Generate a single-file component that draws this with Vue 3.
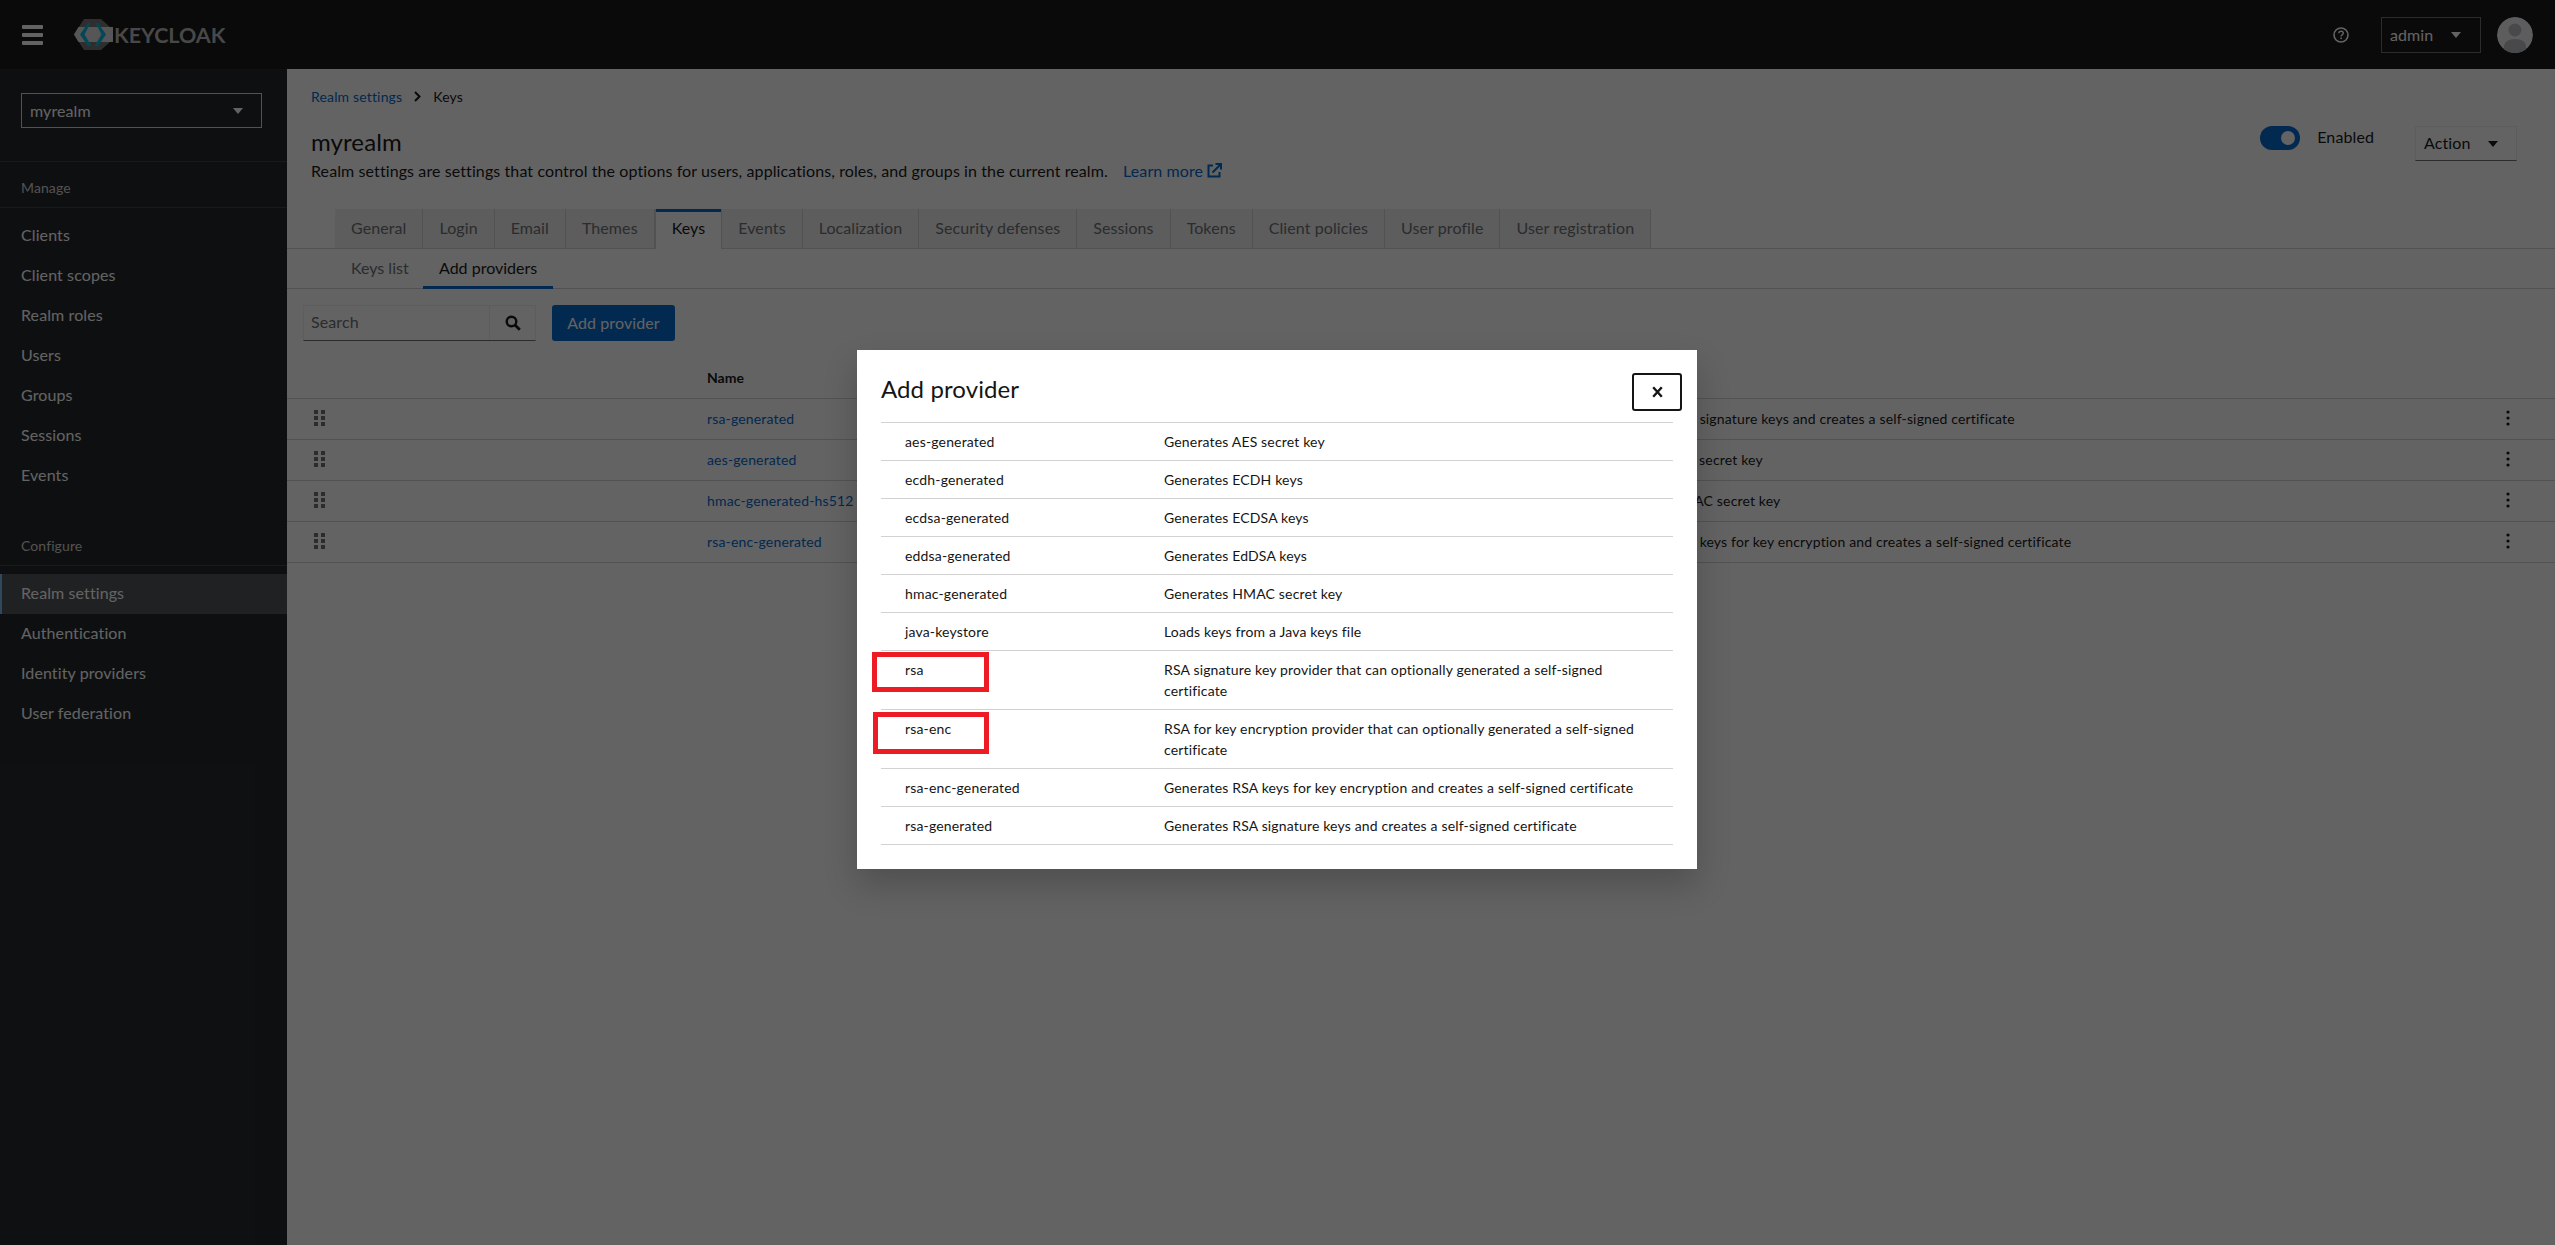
<script setup>
const manage = ['Clients', 'Client scopes', 'Realm roles', 'Users', 'Groups', 'Sessions', 'Events']
const configure = ['Realm settings', 'Authentication', 'Identity providers', 'User federation']
const tabs = ['General', 'Login', 'Email', 'Themes', 'Keys', 'Events', 'Localization', 'Security defenses', 'Sessions', 'Tokens', 'Client policies', 'User profile', 'User registration']

const keys = [
  { name: 'rsa-generated', desc: 'Generates RSA signature keys and creates a self-signed certificate' },
  { name: 'aes-generated', desc: 'Generates AES secret key' },
  { name: 'hmac-generated-hs512', desc: 'Generates HMAC secret key' },
  { name: 'rsa-enc-generated', desc: 'Generates RSA keys for key encryption and creates a self-signed certificate' }
]

const providers = [
  { name: 'aes-generated', desc: 'Generates AES secret key' },
  { name: 'ecdh-generated', desc: 'Generates ECDH keys' },
  { name: 'ecdsa-generated', desc: 'Generates ECDSA keys' },
  { name: 'eddsa-generated', desc: 'Generates EdDSA keys' },
  { name: 'hmac-generated', desc: 'Generates HMAC secret key' },
  { name: 'java-keystore', desc: 'Loads keys from a Java keys file' },
  { name: 'rsa', desc: 'RSA signature key provider that can optionally generated a self-signed certificate', marked: 'one' },
  { name: 'rsa-enc', desc: 'RSA for key encryption provider that can optionally generated a self-signed certificate', marked: 'two' },
  { name: 'rsa-enc-generated', desc: 'Generates RSA keys for key encryption and creates a self-signed certificate' },
  { name: 'rsa-generated', desc: 'Generates RSA signature keys and creates a self-signed certificate' }
]
</script>

<template>
  <div class="page">
    <header class="masthead">
      <div class="burger"><span></span><span></span><span></span></div>
      <div class="logo">
        <svg width="40" height="31" viewBox="0 0 40 31">
          <path d="M10 0h17l9 8v15l-9 8H10L0 15.5z" fill="#757575" />
          <path d="M4.5 8H39v15H4.500L0 15.500z" fill="#dcdcdc" />
          <path d="M14 4l-8 11.500L14 27h3.500l-7-11.500L16.500 4z" fill="#00b8e3" />
          <path d="M24 4l8 11.500L24 27h-3.500l7-11.500L21.500 4z" fill="#00b8e3" />
        </svg>
        <span class="logo-text">KEYCLOAK</span>
      </div>
      <div class="head-right">
        <svg class="help" width="16" height="16" viewBox="0 0 16 16">
          <circle cx="8" cy="8" r="7" fill="none" stroke="#fff" stroke-width="1.600" />
          <path d="M5.800 6.300C5.900 4.900 6.900 4.200 8.100 4.200c1.300 0 2.200.8 2.200 1.900 0 1.800-2.200 1.700-2.200 3.300" fill="none" stroke="#fff" stroke-width="1.400" />
          <rect x="7.300" y="10.500" width="1.600" height="1.600" fill="#fff" />
        </svg>
        <div class="user-select">admin<i class="caret"></i></div>
        <div class="avatar">
          <svg width="36" height="36" viewBox="0 0 36 36">
            <circle cx="18" cy="18" r="18" fill="#f0f0f0" />
            <circle cx="18" cy="13" r="6.500" fill="#b8bbbe" />
            <path d="M7 36v-6c0-5 4-8 11-8s11 3 11 8v6z" fill="#b8bbbe" />
          </svg>
        </div>
      </div>
    </header>

    <div class="body">
      <nav class="sidebar">
        <div class="realm-wrap">
          <div class="realm-select">myrealm<i class="caret"></i></div>
        </div>
        <div class="nav-title first">Manage</div>
        <a v-for="item in manage" :key="item" class="nav-item">{{ item }}</a>
        <div class="nav-title second">Configure</div>
        <a v-for="item in configure" :key="item" class="nav-item" :class="{ active: item === 'Realm settings' }">{{ item }}</a>
      </nav>

      <main class="main">
        <div class="crumbs">
          <a class="link">Realm settings</a>
          <svg width="7" height="11" viewBox="0 0 7 11"><path d="M1 1l4.500 4.500L1 10" fill="none" stroke="#151515" stroke-width="2" /></svg>
          <span>Keys</span>
        </div>
        <div class="title-row">
          <div>
            <h1>myrealm</h1>
            <p class="lead">
              Realm settings are settings that control the options for users, applications, roles, and groups in the current realm.
              <a class="link learn">Learn more
                <svg width="15" height="15" viewBox="0 0 15 15">
                  <path d="M6 2.500H1.500v11h11V9" fill="none" stroke="#06c" stroke-width="2" />
                  <path d="M5.500 9.500L13 2M8.500 1H14v5.500" fill="none" stroke="#06c" stroke-width="2" />
                </svg>
              </a>
            </p>
          </div>
          <div class="title-actions">
            <div class="toggle"><span></span></div>
            <span class="enabled">Enabled</span>
            <div class="action-select">Action<i class="caret dark"></i></div>
          </div>
        </div>

        <div class="tabs">
          <a v-for="tab in tabs" :key="tab" class="tab" :class="{ current: tab === 'Keys' }">{{ tab }}</a>
        </div>
        <div class="subtabs">
          <a class="subtab">Keys list</a>
          <a class="subtab current">Add providers</a>
        </div>

        <div class="toolbar">
          <div class="search">
            <span class="search-input">Search</span>
            <span class="search-btn">
              <svg width="16" height="16" viewBox="0 0 16 16">
                <circle cx="6.500" cy="6.500" r="4.800" fill="none" stroke="#151515" stroke-width="2.400" />
                <path d="M10 10l4.800 4.800" stroke="#151515" stroke-width="2.800" />
              </svg>
            </span>
          </div>
          <button class="primary">Add provider</button>
        </div>

        <div class="key-table">
          <div class="key-row head">
            <span></span><span class="th">Name</span><span class="th">Description</span><span></span>
          </div>
          <div v-for="k in keys" :key="k.name" class="key-row">
            <svg class="grip" width="11" height="16" viewBox="0 0 11 16">
              <g fill="#6a6e73">
                <rect width="4" height="4" /><rect x="7" width="4" height="4" />
                <rect y="6" width="4" height="4" /><rect x="7" y="6" width="4" height="4" />
                <rect y="12" width="4" height="4" /><rect x="7" y="12" width="4" height="4" />
              </g>
            </svg>
            <a class="link">{{ k.name }}</a>
            <span>{{ k.desc }}</span>
            <svg class="kebab" width="4" height="16" viewBox="0 0 4 16">
              <g fill="#151515"><circle cx="2" cy="2" r="1.600" /><circle cx="2" cy="8" r="1.600" /><circle cx="2" cy="14" r="1.600" /></g>
            </svg>
          </div>
        </div>
      </main>
    </div>

    <div class="backdrop">
      <div class="modal">
        <div class="modal-head">
          <h2>Add provider</h2>
          <button class="close">
            <svg width="11" height="12" viewBox="0 0 11 12"><path d="M1.200 1.200l8.600 9.600M9.800 1.200l-8.600 9.600" stroke="#151515" stroke-width="2.400" /></svg>
          </button>
        </div>
        <div class="prov-table">
          <div v-for="p in providers" :key="p.name" class="prov-row">
            <div class="prov-name">{{ p.name }}<span v-if="p.marked" class="mark" :class="p.marked"></span></div>
            <div class="prov-desc">{{ p.desc }}</div>
          </div>
        </div>
      </div>
    </div>
  </div>
</template>

<style>
html, body {
  margin: 0;
  overflow: hidden;
}
</style>

<style scoped>
.page {
  width: 2555px;
  height: 1245px;
  position: relative;
  overflow: hidden;
  font-family: Lato, "Liberation Sans", sans-serif;
  font-size: 16px;
  letter-spacing: 0.1px;
  color: #151515;
  background: #fff;
  display: flex;
  flex-direction: column;
}
.masthead {
  height: 69px;
  background: #151515;
  display: flex;
  align-items: center;
  flex-shrink: 0;
}
.burger {
  margin-left: 22px;
  width: 21px;
  display: flex;
  flex-direction: column;
  gap: 4px;
}
.burger span {
  height: 4px;
  background: #fff;
  border-radius: 1px;
}
.logo {
  margin-left: 31px;
  display: flex;
  align-items: center;
}
.logo-text {
  font-size: 21.500px;
  font-weight: 700;
  color: #b8b8b8;
  letter-spacing: 0;
}
.head-right {
  margin-left: auto;
  display: flex;
  align-items: center;
  padding-right: 22px;
}
.help {
  margin-right: 32px;
}
.user-select {
  width: 100px;
  height: 36px;
  box-sizing: border-box;
  border: 1px solid #6a6e73;
  color: #fff;
  padding-left: 8px;
  display: flex;
  align-items: center;
  position: relative;
}
.caret {
  position: absolute;
  width: 0;
  height: 0;
  border-left: 5px solid transparent;
  border-right: 5px solid transparent;
  border-top: 6px solid #fff;
}
.caret.dark {
  border-top-color: #151515;
}
.user-select .caret {
  right: 19px;
  top: 14px;
}
.avatar {
  margin-left: 16px;
  height: 36px;
  border-radius: 50%;
  overflow: hidden;
}
.body {
  flex: 1;
  display: flex;
  min-height: 0;
}
.sidebar {
  width: 287px;
  flex-shrink: 0;
  background: #212427;
}
.realm-wrap {
  padding: 24px 25px 33px 21px;
  border-bottom: 1px solid #3c3f42;
}
.realm-select {
  height: 35px;
  box-sizing: border-box;
  border: 1px solid #d2d2d2;
  padding-left: 8px;
  color: #fff;
  display: flex;
  align-items: center;
  position: relative;
}
.realm-select .caret {
  right: 18px;
  top: 14px;
}
.nav-title {
  font-size: 14px;
  color: #d2d2d2;
  padding: 0 21px;
  border-bottom: 1px solid #3c3f42;
}
.nav-title.first {
  padding-top: 7px;
  height: 38px;
  line-height: 38px;
  margin-bottom: 8px;
}
.nav-title.second {
  margin-top: 32px;
  margin-bottom: 8px;
  height: 37px;
  line-height: 36px;
}
.nav-item {
  display: block;
  height: 40px;
  line-height: 38px;
  padding-left: 21px;
  color: #fff;
}
.nav-item.active {
  background: #4f5255;
  box-shadow: inset 2px 0 0 #73bcf7;
}
.main {
  flex: 1;
  min-width: 0;
}
.link {
  color: #06c;
}
.crumbs {
  padding: 17px 24px 0;
  height: 21px;
  font-size: 14px;
  line-height: 21px;
  letter-spacing: 0.16px;
  display: flex;
  align-items: center;
  gap: 12px;
}
.title-row {
  display: flex;
  justify-content: space-between;
  padding: 19px 38px 0 24px;
  height: 83px;
}
h1 {
  margin: 0;
  font-size: 24px;
  font-weight: 400;
  line-height: 32px;
}
.lead {
  margin: 0;
  line-height: 24px;
  margin-top: 1px;
}
.learn {
  margin-left: 11px;
}
.learn svg {
  vertical-align: -1px;
}
.title-actions {
  display: flex;
  align-items: flex-start;
}
.toggle {
  width: 40px;
  height: 24px;
  border-radius: 12px;
  background: #06c;
  position: relative;
}
.toggle span {
  position: absolute;
  right: 5px;
  top: 5px;
  width: 14px;
  height: 14px;
  border-radius: 50%;
  background: #fff;
}
.enabled {
  margin-left: 17px;
  margin-right: 41px;
  line-height: 22px;
}
.action-select {
  width: 102px;
  height: 35px;
  box-sizing: border-box;
  border: 1px solid #f0f0f0;
  border-bottom-color: #6a6e73;
  padding: 0 0 3px 8px;
  display: flex;
  align-items: center;
  position: relative;
}
.action-select .caret {
  right: 18px;
  top: 14px;
}
.tabs {
  display: flex;
  padding-left: 48px;
  border-bottom: 1px solid #d2d2d2;
  height: 39px;
  letter-spacing: 0.09px;
}
.tab {
  padding: 0 16px;
  line-height: 38px;
  height: 39px;
  background: #f0f0f0;
  color: #6a6e73;
  border-right: 1px solid #d2d2d2;
}
.tab.current {
  background: #fff;
  color: #151515;
  box-shadow: inset 0 3px 0 #06c;
  border-left: 1px solid #d2d2d2;
  height: 40px;
}
.subtabs {
  display: flex;
  padding-left: 48px;
  height: 39px;
  border-bottom: 1px solid #d2d2d2;
  letter-spacing: 0;
}
.subtab {
  padding: 0 16px;
  line-height: 38px;
  color: #6a6e73;
  white-space: nowrap;
}
.subtab:first-child {
  width: 88px;
  box-sizing: border-box;
}
.subtab.current {
  color: #151515;
  box-shadow: inset 0 -3px 0 #06c;
  height: 40px;
}
.toolbar {
  display: flex;
  padding: 16px 0 0 16px;
  gap: 16px;
  height: 36px;
}
.search {
  display: flex;
  width: 233px;
  height: 36px;
  box-sizing: border-box;
  border: 1px solid #f0f0f0;
  border-bottom-color: #6a6e73;
}
.search-input {
  flex: 1;
  padding-left: 7px;
  line-height: 32px;
  color: #6a6e73;
  border-right: 1px solid #f0f0f0;
}
.search-btn {
  width: 45px;
  display: flex;
  align-items: center;
  justify-content: center;
}
.primary {
  width: 123px;
  height: 36px;
  border: 0;
  border-radius: 3px;
  background: #06c;
  color: #fff;
  font: inherit;
  letter-spacing: inherit;
  padding: 0 0 2px;
}
.key-table {
  margin-top: 18px;
  font-size: 14px;
  letter-spacing: 0.16px;
}
.key-row {
  display: grid;
  grid-template-columns: 420px 895px 1fr 60px;
  align-items: center;
  height: 38px;
  padding-bottom: 2px;
  border-bottom: 1px solid #d2d2d2;
}
.key-row.head {
  height: 37px;
}
.th {
  font-weight: 700;
  letter-spacing: 0;
}
.grip {
  margin-left: 27px;
  margin-top: -1px;
}
.kebab {
  margin-left: 11px;
  margin-top: -1px;
}
.backdrop {
  position: absolute;
  inset: 0;
  background: rgba(3, 3, 3, 0.62);
  display: flex;
  align-items: center;
  justify-content: center;
  padding: 0 1px 26px 0;
  box-sizing: border-box;
}
.modal {
  width: 840px;
  height: 519px;
  box-sizing: border-box;
  background: #fff;
  padding: 0 24px;
  box-shadow: 0 16px 32px rgba(3, 3, 3, 0.2);
}
.modal-head {
  height: 72px;
  display: flex;
  align-items: flex-start;
  justify-content: space-between;
}
h2 {
  margin: 23px 0 0;
  font-size: 24px;
  font-weight: 400;
  line-height: 32px;
}
.close {
  margin: 23px -9px 0 0;
  width: 50px;
  height: 38px;
  border: 2px solid #151515;
  border-radius: 3px;
  background: #fff;
  display: flex;
  align-items: center;
  justify-content: center;
  padding: 0;
}
.prov-table {
  font-size: 14px;
  line-height: 21px;
  letter-spacing: 0.16px;
  border-top: 1px solid #d2d2d2;
}
.prov-row {
  display: grid;
  grid-template-columns: 259px 1fr;
  padding: 8px 24px;
  border-bottom: 1px solid #d2d2d2;
}
.prov-name {
  position: relative;
}
.mark {
  position: absolute;
  box-sizing: border-box;
  border: 5px solid #ed1c24;
}
.mark.one {
  left: -33px;
  top: -7px;
  width: 117px;
  height: 40px;
}
.mark.two {
  left: -32px;
  top: -6px;
  width: 116px;
  height: 42px;
}
</style>
